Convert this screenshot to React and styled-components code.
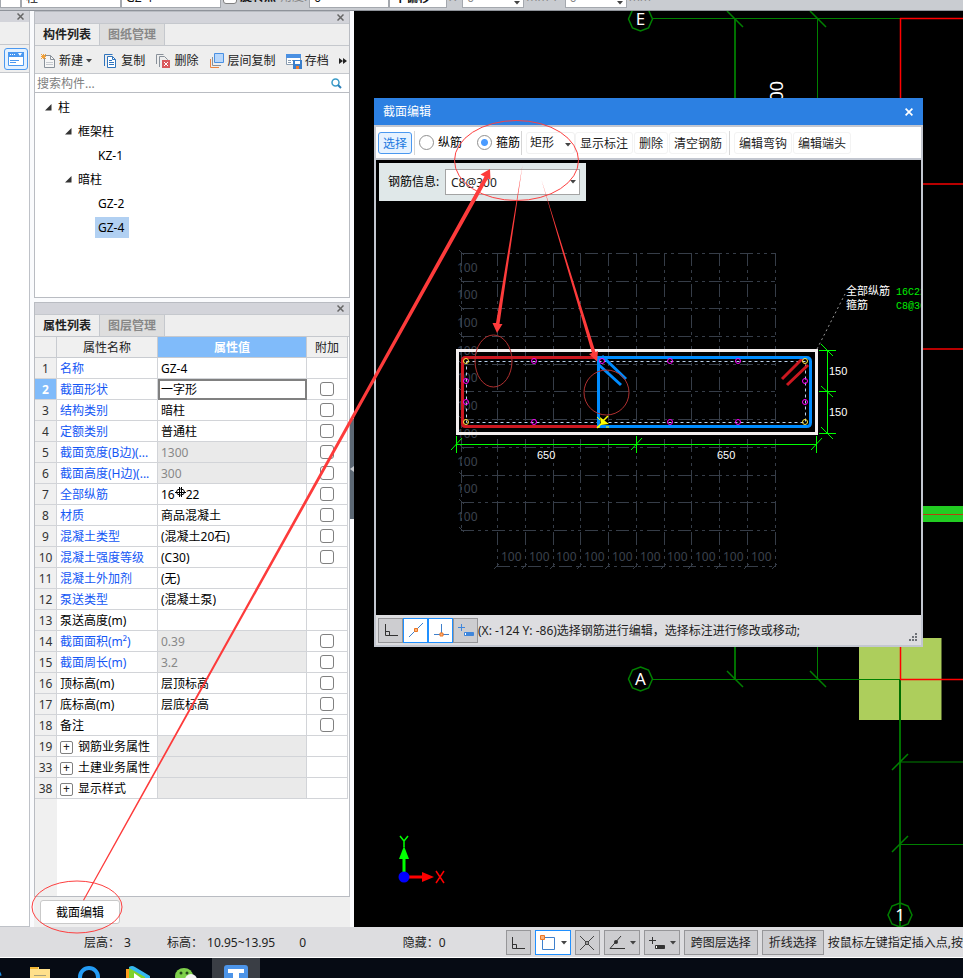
import React, { useState } from "react";
import styled, { createGlobalStyle } from "styled-components";

const GlobalStyle = createGlobalStyle`
  * {
    box-sizing: border-box;
  }
  body {
    margin: 0;
    background: #000;
    overflow: hidden;
  }
  body, button, input, select {
    font-family: "Noto Sans", "Noto Sans CJK SC", sans-serif;
    font-size: 12px;
    line-height: 16px;
    color: #222;
  }
`;

const componentTree = [
  { label: "柱", level: 0, open: true },
  { label: "框架柱", level: 1, open: true },
  { label: "KZ-1", level: 2 },
  { label: "暗柱", level: 1, open: true },
  { label: "GZ-2", level: 2 },
  { label: "GZ-4", level: 2 },
];

const properties = [
  { no: 1, name: "名称", value: "GZ-4", link: true },
  { no: 2, name: "截面形状", value: "一字形", link: true, check: true },
  { no: 3, name: "结构类别", value: "暗柱", link: true, check: true },
  { no: 4, name: "定额类别", value: "普通柱", link: true, check: true },
  { no: 5, name: "截面宽度(B边)(...", value: "1300", link: true, check: true, locked: true },
  { no: 6, name: "截面高度(H边)(...", value: "300", link: true, check: true, locked: true },
  { no: 7, name: "全部纵筋", value: "16", tail: "22", link: true, check: true },
  { no: 8, name: "材质", value: "商品混凝土", link: true, check: true },
  { no: 9, name: "混凝土类型", value: "(混凝土20石)", link: true, check: true },
  { no: 10, name: "混凝土强度等级", value: "(C30)", link: true, check: true },
  { no: 11, name: "混凝土外加剂", value: "(无)", link: true },
  { no: 12, name: "泵送类型", value: "(混凝土泵)", link: true },
  { no: 13, name: "泵送高度(m)", value: "" },
  { no: 14, name: "截面面积(m²)", value: "0.39", link: true, check: true, locked: true },
  { no: 15, name: "截面周长(m)", value: "3.2", link: true, check: true, locked: true },
  { no: 16, name: "顶标高(m)", value: "层顶标高", check: true },
  { no: 17, name: "底标高(m)", value: "层底标高", check: true },
  { no: 18, name: "备注", value: "", check: true },
  { no: 19, name: "钢筋业务属性", value: "", group: true, locked: true },
  { no: 33, name: "土建业务属性", value: "", group: true, locked: true },
  { no: 38, name: "显示样式", value: "", group: true, locked: true },
];

/* ---------- icons ---------- */

const Caret = () => (
  <svg width="6" height="4" viewBox="0 0 6 4"><path d="M0 0h6L3 3.5z" fill="#444" /></svg>
);

const CloseIcon = ({ color = "#666", size = 7 }) => (
  <svg width={size} height={size} viewBox="0 0 7 7">
    <path d="M.5.5l6 6M6.5.5l-6 6" stroke={color} strokeWidth="1.5" />
  </svg>
);

const NewIcon = () => (
  <svg width="16" height="16" viewBox="0 0 16 16">
    <path d="M4.500 2.500h6l4 4v8h-10z" fill="#f6f6f6" stroke="#89919a" />
    <path d="M10.500 2.500v4h4" fill="none" stroke="#89919a" />
    <path d="M6 9.500h7M6 11.500h7" stroke="#c5c9ce" />
    <path d="M1 1l5 5M6 1L1 6M3.500 1v5M1 3.500h5" stroke="#f3a035" />
  </svg>
);

const CopyIcon = () => (
  <svg width="16" height="16" viewBox="0 0 16 16">
    <path d="M2.500 13V1.500h8" fill="none" stroke="#2f74bd" />
    <path d="M5.500 3.500h5l3 3v8h-8z" fill="#fff" stroke="#2f74bd" />
    <path d="M10.500 3.500v3h3M7 7.500h3M7 9.500h5M7 11.500h5" fill="none" stroke="#2f74bd" />
  </svg>
);

const DeleteIcon = () => (
  <svg width="16" height="16" viewBox="0 0 16 16">
    <path d="M1.500 11V1.500h7" fill="none" stroke="#89919a" />
    <path d="M4.500 14V3.500h5l3 3V7" fill="none" stroke="#89919a" />
    <path d="M7 7h8v8H7z" fill="#d9575b" />
    <path d="M9 9l4 4M13 9l-4 4" stroke="#fff" />
  </svg>
);

const LayerCopyIcon = () => (
  <svg width="16" height="16" viewBox="0 0 16 16">
    <path d="M1.500 6v8.500H10" fill="none" stroke="#ec8440" />
    <path d="M3.500 4v8.500H12" fill="none" stroke="#89919a" />
    <path d="M5.500.5h9v9h-9z" fill="#b8d7fb" stroke="#4a90e2" />
  </svg>
);

const ArchiveIcon = () => (
  <svg width="16" height="16" viewBox="0 0 16 16">
    <path d="M.5 1.500h14v10H.5z" fill="#fff" stroke="#8a9cb0" />
    <path d="M0 1h15v4H0z" fill="#4a90e2" />
    <path d="M2 7.500h3M6 7.500h3M2 9.500h3M2 11.500h3" stroke="#8a9cb0" />
    <path d="M7 7h9v9H7z" fill="#3b7fcb" />
    <path d="M9 8h5v3H9z" fill="#fff" />
    <path d="M10 13h3v3h-3z" fill="#f07a2a" />
  </svg>
);

const SearchIcon = () => (
  <svg width="11" height="11" viewBox="0 0 11 11">
    <circle cx="4.500" cy="4.500" r="3.500" fill="none" stroke="#3a9bc8" strokeWidth="1.500" />
    <path d="M7 7l3 3" stroke="#2b7fb8" strokeWidth="2" />
  </svg>
);

const WindowIcon = () => (
  <svg width="16" height="14" viewBox="0 0 16 14">
    <path d="M.5.5h15v13H.5z" fill="#fff" stroke="#4a98f0" />
    <path d="M0 0h16v5H0z" fill="#4a98f0" />
    <path d="M2 2.500h1M4 2.500h1M6 2.500h1" stroke="#fff" />
    <path d="M10 1h4l-2 3z" fill="#fff" />
    <path d="M2 8.500h9M2 10.500h6" stroke="#4a98f0" />
  </svg>
);

const OrthoIcon = () => (
  <svg width="16" height="16" viewBox="0 0 16 16">
    <path d="M2.500 2v11.500H15M2.500 9.500h4v4" fill="none" stroke="#333" />
  </svg>
);

const MidpointIcon = () => (
  <svg width="16" height="16" viewBox="0 0 16 16">
    <path d="M1 15L15 1" stroke="#3f80cc" />
    <path d="M6.500 6.500h3v3h-3z" fill="#fbb27c" stroke="#ee7722" />
  </svg>
);

const PerpIcon = () => (
  <svg width="16" height="16" viewBox="0 0 16 16">
    <path d="M8.500 2v11M1 12.500h15" stroke="#3f80cc" />
    <path d="M7 11h3v3H7z" fill="#fbb27c" stroke="#ee7722" />
  </svg>
);

const OffsetIcon = ({ color }) => (
  <svg width="18" height="16" viewBox="0 0 18 16">
    <path d="M1 5.500h7M4.500 2v7" stroke={color} />
    <path d="M7.500 10.500h9v3h-9z" fill={color} stroke={color} />
    <path d="M8 11h1v2H8z" fill="#fff" />
  </svg>
);

const BoxSnapIcon = () => (
  <svg width="18" height="18" viewBox="0 0 18 18">
    <path d="M3.500 3.500h12v12h-12z" fill="none" stroke="#3f80cc" />
    <path d="M1.500 1.500h4v4h-4z" fill="#fbb27c" stroke="#ee7722" />
  </svg>
);

const CrossIcon = () => (
  <svg width="16" height="16" viewBox="0 0 16 16">
    <path d="M1 1l14 14M15 1L1 15" stroke="#444" />
    <circle cx="8" cy="8" r="1.500" fill="#ccc" stroke="#333" />
  </svg>
);

const AngleIcon = () => (
  <svg width="18" height="16" viewBox="0 0 18 16">
    <path d="M13 1L2 13.500h15" fill="none" stroke="#333" />
    <circle cx="8" cy="7" r="2" fill="#333" />
  </svg>
);

const RebarMark = () => (
  <svg width="11" height="12" viewBox="0 0 11 12">
    <ellipse cx="5.500" cy="5" rx="4" ry="3" fill="none" stroke="#000" />
    <path d="M4.500 0v10M6.500 0v10M0 5.500h11" stroke="#000" />
  </svg>
);

const TaskIcon = ({ shift = 0, children }) => (
  <svg width="28" height="16" viewBox={`${shift} 0 28 16`}>{children}</svg>
);

/* ---------- top option bar ---------- */

function OptionBar() {
  return (
    <OptionBarRow>
      <OptionInput $width={21} aria-label="楼层" defaultValue="" />
      <OptionInput $width={100} aria-label="构件类型" defaultValue="柱" />
      <OptionInput $width={100} aria-label="构件名称" defaultValue="GZ-4" />
      <OptionLabel $strong>
        <CheckBox type="checkbox" />
        旋转点
      </OptionLabel>
      <OptionLabel htmlFor="angle">角度:</OptionLabel>
      <OptionInput id="angle" $width={80} defaultValue="0" />
      <OptionInput $width={58} $strong aria-label="偏移" defaultValue="不偏移" />
      <OptionLabel htmlFor="offset-x">X</OptionLabel>
      <SpinBox>
        <OptionInput id="offset-x" $width={62} $muted defaultValue="0" />
        <Caret />
      </SpinBox>
      <OptionLabel htmlFor="offset-y">mm Y</OptionLabel>
      <SpinBox>
        <OptionInput id="offset-y" $width={62} $muted defaultValue="0" />
        <Caret />
      </SpinBox>
      <OptionLabel>mm</OptionLabel>
    </OptionBarRow>
  );
}

/* ---------- left panels ---------- */

function PanelTabs({ active, other }) {
  return (
    <Tabs>
      <Tab $active>{active}</Tab>
      <Tab>{other}</Tab>
    </Tabs>
  );
}

function ComponentPanel() {
  const [selected, setSelected] = useState("GZ-4");

  return (
    <Panel>
      <PanelTitle><CloseIcon /></PanelTitle>
      <PanelTabs active="构件列表" other="图纸管理" />
      <ToolRow>
        <ToolButton><NewIcon />新建<Caret /></ToolButton>
        <ToolButton><CopyIcon />复制</ToolButton>
        <ToolButton><DeleteIcon />删除</ToolButton>
        <ToolButton><LayerCopyIcon />层间复制</ToolButton>
        <ToolButton><ArchiveIcon />存档</ToolButton>
        <ToolButton aria-label="更多">
          <svg width="8" height="6" viewBox="0 0 8 6"><path d="M0 0l4 3-4 3zM4 0l4 3-4 3z" fill="#222" /></svg>
        </ToolButton>
      </ToolRow>
      <SearchRow>
        <SearchInput placeholder="搜索构件..." aria-label="搜索构件" />
        <SearchIcon />
      </SearchRow>
      <Tree>
        {componentTree.map((node) => (
          <TreeRow key={node.label} $level={node.level}>
            {node.open && (
              <svg width="7" height="7" viewBox="0 0 7 7"><path d="M6.500 0v6.500H0z" fill="#333" /></svg>
            )}
            <TreeLabel
              $leaf={!node.open}
              $selected={node.label === selected}
              onClick={() => setSelected(node.label)}
            >
              {node.label}
            </TreeLabel>
          </TreeRow>
        ))}
      </Tree>
    </Panel>
  );
}

function PropertyRow({ item, selected, onSelect }) {
  return (
    <tr onClick={onSelect}>
      <NumberCell $selected={selected}>{item.no}</NumberCell>
      <NameCell $link={item.link}>
        {item.group && <ExpandButton aria-label={item.name}>+</ExpandButton>}
        {item.name}
      </NameCell>
      <ValueCell $locked={item.locked} $selected={selected}>
        {item.value}
        {item.tail && <RebarMark />}
        {item.tail}
      </ValueCell>
      <CheckCell>
        {item.check && <CheckBox type="checkbox" aria-label={item.name} />}
      </CheckCell>
    </tr>
  );
}

function PropertyPanel() {
  const [row, setRow] = useState(2);

  return (
    <Panel $grow>
      <PanelTitle><CloseIcon /></PanelTitle>
      <PanelTabs active="属性列表" other="图层管理" />
      <TableArea>
        <PropertyTable>
          <colgroup>
            <col width="22" />
            <col width="101" />
            <col />
            <col width="41" />
          </colgroup>
          <thead>
            <tr>
              <HeadCell aria-label="序号" />
              <HeadCell>属性名称</HeadCell>
              <HeadCell $active>属性值</HeadCell>
              <HeadCell>附加</HeadCell>
            </tr>
          </thead>
          <tbody>
            {properties.map((item) => (
              <PropertyRow
                key={item.no}
                item={item}
                selected={item.no === row}
                onSelect={() => setRow(item.no)}
              />
            ))}
          </tbody>
        </PropertyTable>
        <NumberFill />
      </TableArea>
    </Panel>
  );
}

/* ---------- main drawing ---------- */

const Bubble = ({ x, y, label }) => (
  <g>
    <path
      d={`M${x} ${y - 12}l8 3 4 9-4 9-8 3-8-3-4-9 4-9z`}
      fill="none"
      stroke="#008000"
      strokeWidth="1.5"
    />
    <text x={x} y={y + 6} fill="#fff" fontSize="17" textAnchor="middle">{label}</text>
  </g>
);

function PlanDrawing() {
  return (
    <svg width="609" height="916" viewBox="354 11 609 916">
      <path d="M859 638h82.500v82h-82.500z" fill="#adce5c" />
      <path d="M923 506h40v16h-40z" fill="#22cc22" />
      <path d="M923 514.500h40" stroke="#b8400f" strokeWidth="1" />
      <g stroke="#008000" fill="none">
        <path d="M652 18.500h248M652 679.500h248M817.500 18v661M900 762h63M900 844.500h63" />
        <path d="M735 18v661M900 679v248" stroke="#007000" strokeWidth="2" />
        <path
          d="M727 11l16 16M810 11l16 16M727 671l16 16M810 671l16 16M892 770l16-16M892 852l16-16"
          strokeWidth="1.500"
        />
      </g>
      <path d="M900 18.500h63M900.500 18v661M900 679.500h63" stroke="#ff0000" strokeWidth="1.500" fill="none" />
      <path d="M900 184h63M900 349h63" stroke="#b80000" strokeWidth="2" />
      <Bubble x={640.5} y={19} label="E" />
      <Bubble x={640.5} y={679} label="A" />
      <Bubble x={900} y={915} label="1" />
      <text transform="translate(783 81) rotate(-90)" textAnchor="end" fill="#fff" fontSize="18">00</text>

      <path d="M404 872v-16" stroke="#00ff00" strokeWidth="3" />
      <path d="M404 846l5 13h-10z" fill="#00ff00" />
      <path d="M409 877h15" stroke="#ff0000" strokeWidth="3" />
      <path d="M434 877l-12-5v10z" fill="#ff0000" />
      <circle cx="404" cy="877" r="5.500" fill="#0000ff" />
      <path d="M400 836l4 5 4-5M404 841v6" fill="none" stroke="#00ff00" strokeWidth="1.500" />
      <path d="M436 871l8 12M444 871l-8 12" stroke="#ff0000" strokeWidth="1.500" />
    </svg>
  );
}

/* ---------- section drawing ---------- */

const columns = [497, 525, 553, 580, 608, 636, 664, 691, 719, 747, 775];
const rows = [253, 281, 308, 336, 364, 391, 419, 447, 475, 502, 530];
const bars = [
  [534, 361], [602, 361], [670, 361], [738, 361],
  [534, 422], [670, 422], [738, 422],
  [466, 381], [466, 402], [805, 381], [805, 402],
];
const cornerBars = [[466, 361], [466, 422], [805, 361], [805, 422]];

function SectionDrawing() {
  return (
    <svg width="545" height="455" viewBox="376 160 545 455">
      <g stroke="#363d48" fill="none" shapeRendering="crispEdges" strokeDasharray="13 4 3 4 3 4">
        {columns.map((x) => <path key={x} d={`M${x + 0.5} 253v314`} />)}
        {rows.map((y) => <path key={y} d={`M461 ${y + 0.5}h314`} />)}
        <path d="M461.500 253v277M497 566.500h278" />
      </g>
      <g stroke="#363d48">
        {columns.map((x) => <path key={x} d={`M${x - 3} 569l5-5`} />)}
        {rows.map((y) => <path key={y} d={`M459 ${y - 3}l5 5`} />)}
      </g>
      <g fill="#3c434e" fontSize="12">
        {rows.slice(1).map((y) => <text key={y} x="457" y={y - 9}>100</text>)}
        {columns.slice(1).map((x) => <text key={x} x={x - 24} y="561">100</text>)}
      </g>

      <path d="M457.500 350.500h359v83h-359z" fill="none" stroke="#f3eeee" strokeWidth="3" />
      <path
        d="M599 357.500H465q-2.500 0-2.500 3v63q0 3 3 3H599"
        fill="none" stroke="#cc1820" strokeWidth="3"
      />
      <path d="M466.500 361.500h339v61h-339z" fill="none" stroke="#b9d3f0" strokeDasharray="3 3" />
      <path d="M804 357l-22 22M808 365l-21 20" stroke="#cc1820" strokeWidth="3" />
      <path
        d="M598.500 357.500h208q4 0 4 4v61q0 4-4 4h-208z"
        fill="none" stroke="#008cff" strokeWidth="3"
      />
      <path d="M599 365l22 20M602 356l24 23" stroke="#008cff" strokeWidth="3" />
      <g fill="none" stroke="#ff00ff">
        {bars.map(([x, y]) => <circle key={`${x}-${y}`} cx={x} cy={y} r="2.500" />)}
      </g>
      <g fill="none" stroke="#ffe640">
        {cornerBars.map(([x, y]) => <circle key={`${x}-${y}`} cx={x} cy={y} r="2.500" />)}
      </g>
      <path d="M608 416l-5 5M597 428l5-5" stroke="#ffff00" strokeWidth="1.500" />
      <path d="M600 417l1 8 8-1-4-3z" fill="#ffff00" />
      <path d="M597 417l3 3M606 427h3M597 427h3" stroke="#ffff00" />

      <g stroke="#00ff00" fill="none">
        <path d="M456 444.500h361M456.500 436v17M636.500 436v17M816.500 436v17" />
        <path d="M451 450l11-12M631 450l11-12M811 450l11-12" />
        <path d="M827.500 350v84M819 350.500h17M819 391.500h17M819 433.500h17" />
        <path d="M821 344l12 12M821 386l12 11M821 427l12 12" />
      </g>
      <g fill="#fff" fontSize="11" fontFamily="Liberation Sans, sans-serif">
        <text x="537" y="459">650</text>
        <text x="717" y="459">650</text>
        <text x="829" y="375">150</text>
        <text x="829" y="416">150</text>
      </g>
      <path d="M817 349l28-55" stroke="#999" strokeDasharray="2 3" />
      <g fill="#fff" fontSize="11">
        <text x="846" y="295">全部纵筋</text>
        <text x="846" y="309">箍筋</text>
      </g>
      <g fill="#00ee00" fontSize="10" fontFamily="Liberation Mono, monospace">
        <text x="896" y="295">16C22</text>
        <text x="896" y="309">C8@300</text>
      </g>
    </svg>
  );
}

function SectionDialog() {
  const [target, setTarget] = useState("stirrup");

  return (
    <Dialog>
      <DialogTitle>
        截面编辑
        <DialogClose aria-label="关闭"><CloseIcon color="#fff" size={8} /></DialogClose>
      </DialogTitle>
      <DialogToolbar>
        <DialogButton $active>选择</DialogButton>
        <Separator />
        <RadioLabel>
          <Radio type="radio" name="bar" checked={target === "main"} onChange={() => setTarget("main")} />
          纵筋
        </RadioLabel>
        <RadioLabel>
          <Radio type="radio" name="bar" checked={target === "stirrup"} onChange={() => setTarget("stirrup")} />
          箍筋
        </RadioLabel>
        <Separator />
        <Combo $width={49}>
          <ShapeSelect aria-label="箍筋形状"><option>矩形</option></ShapeSelect>
          <Caret />
        </Combo>
        <DialogButton>显示标注</DialogButton>
        <DialogButton>删除</DialogButton>
        <DialogButton>清空钢筋</DialogButton>
        <Separator />
        <DialogButton>编辑弯钩</DialogButton>
        <DialogButton>编辑端头</DialogButton>
      </DialogToolbar>
      <DialogCanvas>
        <SectionDrawing />
        <RebarForm>
          <label htmlFor="rebar-info">钢筋信息:</label>
          <Combo $width={135}>
            <RebarSelect id="rebar-info"><option>C8@300</option></RebarSelect>
            <Caret />
          </Combo>
        </RebarForm>
      </DialogCanvas>
      <DialogStatus>
        <SnapGroup>
          <SnapButton aria-label="正交"><OrthoIcon /></SnapButton>
          <SnapButton $active aria-label="中点"><MidpointIcon /></SnapButton>
          <SnapButton $active aria-label="垂点"><PerpIcon /></SnapButton>
          <SnapButton aria-label="偏移"><OffsetIcon color="#4087dc" /></SnapButton>
        </SnapGroup>
        <DialogMessage>(X: -124 Y: -86)选择钢筋进行编辑，选择标注进行修改或移动;</DialogMessage>
        <svg width="9" height="9" viewBox="0 0 9 9">
          <path d="M6 0h2v2H6zM3 3h2v2H3zM6 3h2v2H6zM0 6h2v2H0zM3 6h2v2H3zM6 6h2v2H6z" fill="#6e7278" />
        </svg>
      </DialogStatus>
    </Dialog>
  );
}

/* ---------- status bar and task bar ---------- */

function StatusBar() {
  return (
    <StatusRow>
      <StatusReadout>
        <StatusPair><span>层高：</span><span>3</span></StatusPair>
        <StatusPair><span>标高：</span><span>10.95~13.95</span></StatusPair>
        <span>0</span>
      </StatusReadout>
      <HiddenCount>隐藏：0</HiddenCount>
      <StatusButtons>
        <SnapButton aria-label="正交"><OrthoIcon /></SnapButton>
        <SnapButton $active $wide aria-label="框选"><BoxSnapIcon /><Caret /></SnapButton>
        <SnapButton aria-label="交点"><CrossIcon /></SnapButton>
        <SnapButton $wide aria-label="角度"><AngleIcon /><Caret /></SnapButton>
        <SnapButton $wide aria-label="偏移"><OffsetIcon color="#333" /><Caret /></SnapButton>
        <TextButton>跨图层选择</TextButton>
        <TextButton>折线选择</TextButton>
      </StatusButtons>
      <Hint>按鼠标左键指定插入点,按</Hint>
    </StatusRow>
  );
}

function TaskBar() {
  return (
    <TaskRow>
      <TaskTile $edge>
        <TaskIcon><path d="M0 10q2 3 2 6H0z" fill="#1e8be0" /></TaskIcon>
      </TaskTile>
      <TaskTile>
        <TaskIcon shift={4}>
          <path d="M3 5h10v2h11v9H3z" fill="#ffe08a" />
          <path d="M4 5h8v2H4z" fill="#f2b632" />
          <path d="M8 13.500h12" stroke="#a8a07a" />
        </TaskIcon>
      </TaskTile>
      <TaskTile>
        <TaskIcon shift={4}><circle cx="15" cy="15" r="9" fill="none" stroke="#239cf5" strokeWidth="4" /></TaskIcon>
      </TaskTile>
      <TaskTile>
        <TaskIcon shift={4}>
          <path d="M4 7h5v9H4z" fill="#ff9d1c" />
          <path d="M7 5q3-2 6 0l15 9v2H7z" fill="#35b8f0" />
          <path d="M7 6l16 9v1H7z" fill="#7fd12b" />
          <path d="M12 11l7 5h-7z" fill="#fff" />
        </TaskIcon>
      </TaskTile>
      <TaskTile>
        <TaskIcon shift={2}>
          <ellipse cx="12" cy="14" rx="9" ry="8" fill="#7ed04b" />
          <circle cx="9" cy="11" r="1.500" fill="#24491a" />
          <circle cx="15" cy="11" r="1.500" fill="#24491a" />
          <ellipse cx="19" cy="18" rx="6" ry="6" fill="#f2f2f2" />
        </TaskIcon>
      </TaskTile>
      <TaskTile $active>
        <TaskIcon>
          <rect x="2" y="3" width="24" height="18" rx="3" fill="#4c94e8" />
          <path d="M6 7h16v4h-5v5h-6v-5H6z" fill="#fff" />
        </TaskIcon>
      </TaskTile>
    </TaskRow>
  );
}

function Markup() {
  return (
    <MarkupLayer width="963" height="978" viewBox="0 0 963 978">
      <g fill="none" stroke="#fd4040">
        <ellipse cx="516.500" cy="160.500" rx="62" ry="40" />
        <ellipse cx="77" cy="907" rx="45" ry="26" />
        <ellipse cx="493.500" cy="361" rx="18.500" ry="26" stroke="#b03030" />
        <circle cx="606.500" cy="392.500" r="22.500" stroke="#b03030" />
      </g>
      <g fill="#fd3b3b">
        <path d="M83 900L484.500 176.500 480.500 174.500 490 169 490.500 180 488 178.500 84 900.500z" />
        <path d="M522.500 165L496 323h-3.500l4.500 10 5.500-9h-3z" />
        <path d="M541.500 180L592 353l-3 1 8 7.500 1-10.500-2.500 1z" />
      </g>
    </MarkupLayer>
  );
}

export default function App() {
  return (
    <Page>
      <GlobalStyle />
      <OptionBar />
      <Workspace>
        <SideStrip>
          <PanelTitle><CloseIcon /></PanelTitle>
          <StripSpace />
          <StripTools>
            <StripButton aria-label="列表"><WindowIcon /></StripButton>
          </StripTools>
        </SideStrip>
        <PanelColumn>
          <ComponentPanel />
          <PropertyPanel />
          <PanelFooter><EditButton>截面编辑</EditButton></PanelFooter>
        </PanelColumn>
        <Splitter>
          <SplitHandle aria-label="收起">
            <svg width="4" height="6" viewBox="0 0 4 6"><path d="M4 0v6L0 3z" fill="#c9ccd1" /></svg>
          </SplitHandle>
        </Splitter>
        <Canvas>
          <PlanDrawing />
          <SectionDialog />
        </Canvas>
      </Workspace>
      <StatusBar />
      <TaskBar />
      <Markup />
    </Page>
  );
}

/* ---------- styles ---------- */

const Page = styled.div`
  position: relative;
  display: flex;
  flex-direction: column;
  height: 100vh;
  overflow: hidden;
`;

const OptionBarRow = styled.div`
  display: flex;
  align-items: flex-end;
  flex: none;
  height: 11px;
  padding-bottom: 2px;
  background: #c9ccd1;
  border-bottom: 1px solid #8f939a;
  overflow: hidden;
`;

const OptionInput = styled.input`
  flex: none;
  width: ${(p) => p.$width}px;
  height: 22px;
  padding: 0 4px;
  color: ${(p) => (p.$muted ? "#888" : "#111")};
  font-weight: ${(p) => (p.$strong ? 700 : 400)};
  background: #fff;
  border: 1px solid #a4a8ae;
`;

const OptionLabel = styled.label`
  display: flex;
  align-items: center;
  gap: 3px;
  flex: none;
  height: 22px;
  padding: 0 2px;
  color: ${(p) => (p.$strong ? "#111" : "#888")};
  font-weight: ${(p) => (p.$strong ? 700 : 400)};
`;

const SpinBox = styled.span`
  position: relative;
  flex: none;
  height: 22px;
  margin-left: 4px;

  svg {
    position: absolute;
    right: 4px;
    bottom: 3px;
  }
`;

const CheckBox = styled.input`
  appearance: none;
  display: block;
  flex: none;
  width: 14px;
  height: 14px;
  margin: 0 auto;
  background: #fff;
  border: 1px solid #808080;
  border-radius: 3px;

  &:checked {
    background: #4a98f0;
  }
`;

const Workspace = styled.main`
  display: flex;
  flex: 1;
  min-height: 0;
  background: #fafbfd;
`;

const SideStrip = styled.aside`
  display: flex;
  flex-direction: column;
  flex: none;
  width: 30px;
  margin-right: 4px;
  background: #fff;
  border-right: 1px solid #bfc2c8;
  border-bottom: 1px solid #bfc2c8;
`;

const StripSpace = styled.div`
  height: 23px;
  background: #efefef;
  border-bottom: 1px solid #c5c8cd;
`;

const StripTools = styled.div`
  display: flex;
  justify-content: flex-end;
  padding: 3px 1px 2px;
  background: #efefef;
  border-bottom: 1px solid #c5c8cd;
`;

const StripButton = styled.button`
  display: flex;
  align-items: center;
  justify-content: center;
  width: 24px;
  height: 22px;
  padding: 0;
  background: #e3f1ff;
  border: 1px solid #4a98f0;
  border-radius: 3px;
`;

const PanelColumn = styled.section`
  display: flex;
  flex-direction: column;
  flex: none;
  width: 316px;
`;

const Panel = styled.div`
  display: flex;
  flex-direction: column;
  flex: ${(p) => (p.$grow ? 1 : "none")};
  min-height: 0;
  margin-bottom: ${(p) => (p.$grow ? 0 : 4)}px;
  background: #fff;
  border: 1px solid #b9bcc2;
`;

const PanelTitle = styled.div`
  display: flex;
  align-items: center;
  justify-content: flex-end;
  flex: none;
  height: 11px;
  padding-right: 5px;
  background: #d3d4da;
`;

const Tabs = styled.div`
  display: flex;
  flex: none;
  height: 23px;
  background: #eee;
  border-top: 1px solid #c5c8cd;
  border-bottom: 1px solid #c5c8cd;
`;

const Tab = styled.button`
  width: 65px;
  padding: 0;
  color: ${(p) => (p.$active ? "#222" : "#888")};
  font-weight: 700;
  background: ${(p) => (p.$active ? "#eee" : "#dedede")};
  border: 0;
  border-right: 1px solid #c5c8cd;
`;

const ToolRow = styled.div`
  display: flex;
  align-items: center;
  justify-content: space-between;
  height: 28px;
  padding: 2px 2px 0 5px;
  background: #eee;
  border-bottom: 1px solid #c5c8cd;
`;

const ToolButton = styled.button`
  display: flex;
  align-items: center;
  gap: 3px;
  padding: 0;
  white-space: nowrap;
  background: none;
  border: 0;
`;

const SearchRow = styled.div`
  display: flex;
  align-items: center;
  height: 19px;
  padding: 1px 7px 0 2px;
  border-bottom: 1px solid #b9bcc2;
`;

const SearchInput = styled.input`
  flex: 1;
  padding: 0;
  border: 0;
  outline: 0;

  &::placeholder {
    color: #808080;
  }
`;

const Tree = styled.ul`
  height: 204px;
  margin: 0;
  padding: 2px 0 0;
  list-style: none;
`;

const TreeRow = styled.li`
  display: flex;
  align-items: center;
  height: 24px;
  padding-left: ${(p) => (p.$level === 2 ? 60 : 10 + p.$level * 20)}px;
`;

const TreeLabel = styled.button`
  height: 21px;
  margin-left: ${(p) => (p.$leaf ? 0 : 3)}px;
  padding: 2px 5px 0 3px;
  color: #000;
  background: ${(p) => (p.$selected ? "#b1d0f2" : "transparent")};
  border: 0;
`;

const TableArea = styled.div`
  display: flex;
  flex-direction: column;
  flex: 1;
  min-height: 0;
`;

const PropertyTable = styled.table`
  table-layout: fixed;
  width: 313px;
  border-collapse: separate;
  border-spacing: 0;
`;

const HeadCell = styled.th`
  height: 21px;
  padding: 2px 0 0;
  color: ${(p) => (p.$active ? "#fff" : "#222")};
  font-weight: ${(p) => (p.$active ? 700 : 400)};
  background: ${(p) => (p.$active ? "#80bbfa" : "#f0f0f0")};
  border-right: 1px solid #c8cbd0;
  border-bottom: 1px solid #c8cbd0;
`;

const Cell = styled.td`
  height: 21px;
  padding: 2px 3px 0;
  color: #000;
  white-space: nowrap;
  overflow: hidden;
  border-right: 1px solid #d2d4d8;
  border-bottom: 1px solid #d2d4d8;
`;

const NumberCell = styled(Cell)`
  padding: 2px 0 0;
  text-align: center;
  color: ${(p) => (p.$selected ? "#fff" : "#333")};
  font-weight: ${(p) => (p.$selected ? 700 : 400)};
  background: ${(p) => (p.$selected ? "#80bbfa" : "#f0f0f0")};
`;

const NameCell = styled(Cell)`
  color: ${(p) => (p.$link ? "#1457f5" : "#000")};
`;

const ValueCell = styled(Cell)`
  color: ${(p) => (p.$locked ? "#888" : "#000")};
  background: ${(p) => (p.$locked ? "#eaeaea" : "#fff")};
  outline: ${(p) => (p.$selected ? "2px solid #808080" : "none")};
  outline-offset: -2px;
`;

const CheckCell = styled(Cell)`
  padding: 0;
`;

const ExpandButton = styled.button`
  width: 13px;
  height: 13px;
  margin-right: 5px;
  padding: 0;
  font-size: 12px;
  line-height: 10px;
  background: #fff;
  border: 1px solid #808080;
  border-radius: 2px;
`;

const NumberFill = styled.div`
  flex: 1;
  width: 22px;
  background: #f0f0f0;
`;

const PanelFooter = styled.div`
  flex: none;
  height: 30px;
  padding: 3px 6px;
  background: #efefef;
`;

const EditButton = styled.button`
  width: 80px;
  height: 24px;
  padding: 2px 0 0;
  color: #000;
  background: #fff;
  border: 1px solid #c9c9c9;
  border-radius: 3px;
`;

const Splitter = styled.div`
  display: flex;
  align-items: center;
  flex: none;
  width: 4px;
`;

const SplitHandle = styled.button`
  display: flex;
  align-items: center;
  width: 4px;
  height: 100px;
  padding: 0;
  background: #5c6874;
  border: 0;
`;

const Canvas = styled.section`
  position: relative;
  flex: 1;
  min-width: 0;
  background: #000;
  overflow: hidden;

  > svg {
    display: block;
  }
`;

const Dialog = styled.div`
  position: absolute;
  left: 20px;
  top: 87px;
  display: flex;
  flex-direction: column;
  width: 549px;
  background: #c3c7d0;
`;

const DialogTitle = styled.header`
  display: flex;
  align-items: center;
  justify-content: space-between;
  height: 27px;
  padding: 1px 10px 0 9px;
  color: #fff;
  background: #2c80e2;
`;

const DialogClose = styled.button`
  display: flex;
  padding: 0;
  background: none;
  border: 0;
`;

const DialogToolbar = styled.div`
  display: flex;
  align-items: center;
  height: 31px;
  margin: 2px 2px 2px;
  padding-left: 2px;
  background: #fff;
`;

const DialogButton = styled.button`
  height: 22px;
  margin-right: 1px;
  padding: 2px 4px 0;
  color: ${(p) => (p.$active ? "#1a78e0" : "#222")};
  background: ${(p) => (p.$active ? "#e6f2ff" : "#fff")};
  border: 1px solid ${(p) => (p.$active ? "#4a98f0" : "#f3f3f3")};
  border-radius: 3px;
`;

const Separator = styled.div`
  width: 1px;
  height: 24px;
  margin: 0 4px 0 1px;
  background: #d5d5d5;
`;

const RadioLabel = styled.label`
  display: flex;
  align-items: center;
  gap: 4px;
  padding-right: 15px;
  color: #000;

  & + ${Separator} {
    margin-left: -14px;
  }
`;

const Radio = styled.input`
  appearance: none;
  width: 15px;
  height: 15px;
  margin: 0;
  background: #fff;
  border: 1px solid #909090;
  border-radius: 50%;

  &:checked {
    background: radial-gradient(circle, #4a9bff 3px, #fff 4px);
  }
`;

const Combo = styled.span`
  position: relative;
  width: ${(p) => p.$width}px;

  svg {
    position: absolute;
    right: 4px;
    top: 11px;
  }
`;

const ShapeSelect = styled.select`
  appearance: none;
  width: 100%;
  height: 22px;
  padding: 1px 3px 0;
  background: #fff;
  border: 1px solid #f0f0f0;
  border-radius: 3px;
`;

const RebarSelect = styled(ShapeSelect)`
  display: block;
  height: 26px;
  padding: 1px 5px 0;
  border: 1px solid #a4a4a4;
  border-radius: 0;
`;

const DialogCanvas = styled.div`
  position: relative;
  margin: 0 2px;
  background: #000;

  > svg {
    display: block;
  }
`;

const RebarForm = styled.form`
  position: absolute;
  left: 3px;
  top: 3px;
  display: flex;
  align-items: center;
  justify-content: space-between;
  width: 207px;
  height: 38px;
  padding: 0 6px 0 9px;
  color: #000;
  background: #e0e8e9;
`;

const DialogStatus = styled.footer`
  display: flex;
  align-items: center;
  height: 30px;
  margin: 0 2px 2px;
  padding: 0 3px 0 2px;
  background: #dddde0;

  > svg {
    align-self: flex-end;
    margin-bottom: 3px;
  }
`;

const SnapGroup = styled.div`
  display: flex;
`;

const SnapButton = styled.button`
  display: flex;
  align-items: center;
  justify-content: center;
  gap: 4px;
  flex: none;
  width: ${(p) => (p.$wide ? 36 : 25)}px;
  height: 25px;
  padding: 0;
  background: ${(p) => (p.$active ? "#fff" : "#cdcdd0")};
  border: 1px solid ${(p) => (p.$active ? "#2090ff" : "#969699")};
`;

const DialogMessage = styled.span`
  flex: 1;
  padding-top: 2px;
  white-space: nowrap;
`;

const StatusRow = styled.footer`
  display: flex;
  align-items: center;
  flex: none;
  height: 31px;
  padding: 1px 0 0 84px;
  white-space: nowrap;
  background: #dddde0;
  border-bottom: 1px solid #fff;
  overflow: hidden;
`;

const StatusReadout = styled.div`
  display: flex;
  gap: 24px;
  width: 319px;
`;

const StatusPair = styled.span`
  display: flex;
  gap: 4px;
  min-width: 59px;
`;

const HiddenCount = styled.span`
  width: 103px;
`;

const StatusButtons = styled.div`
  display: flex;
  gap: 4px;
`;

const TextButton = styled.button`
  height: 25px;
  padding: 1px 6px 0;
  white-space: nowrap;
  background: #cdcdd0;
  border: 1px solid #969699;
`;

const Hint = styled.span`
  padding-left: 4px;
`;

const TaskRow = styled.nav`
  display: flex;
  flex: none;
  height: 20px;
  background: #060b14;
  overflow: hidden;
`;

const TaskTile = styled.div`
  display: flex;
  align-items: flex-end;
  justify-content: ${(p) => (p.$edge ? "flex-start" : "center")};
  flex: none;
  width: ${(p) => (p.$edge ? 20 : 48)}px;
  height: 20px;
  background: ${(p) => (p.$active ? "#3a3e45" : "transparent")};
`;

const MarkupLayer = styled.svg`
  position: absolute;
  left: 0;
  top: 0;
  pointer-events: none;
`;
